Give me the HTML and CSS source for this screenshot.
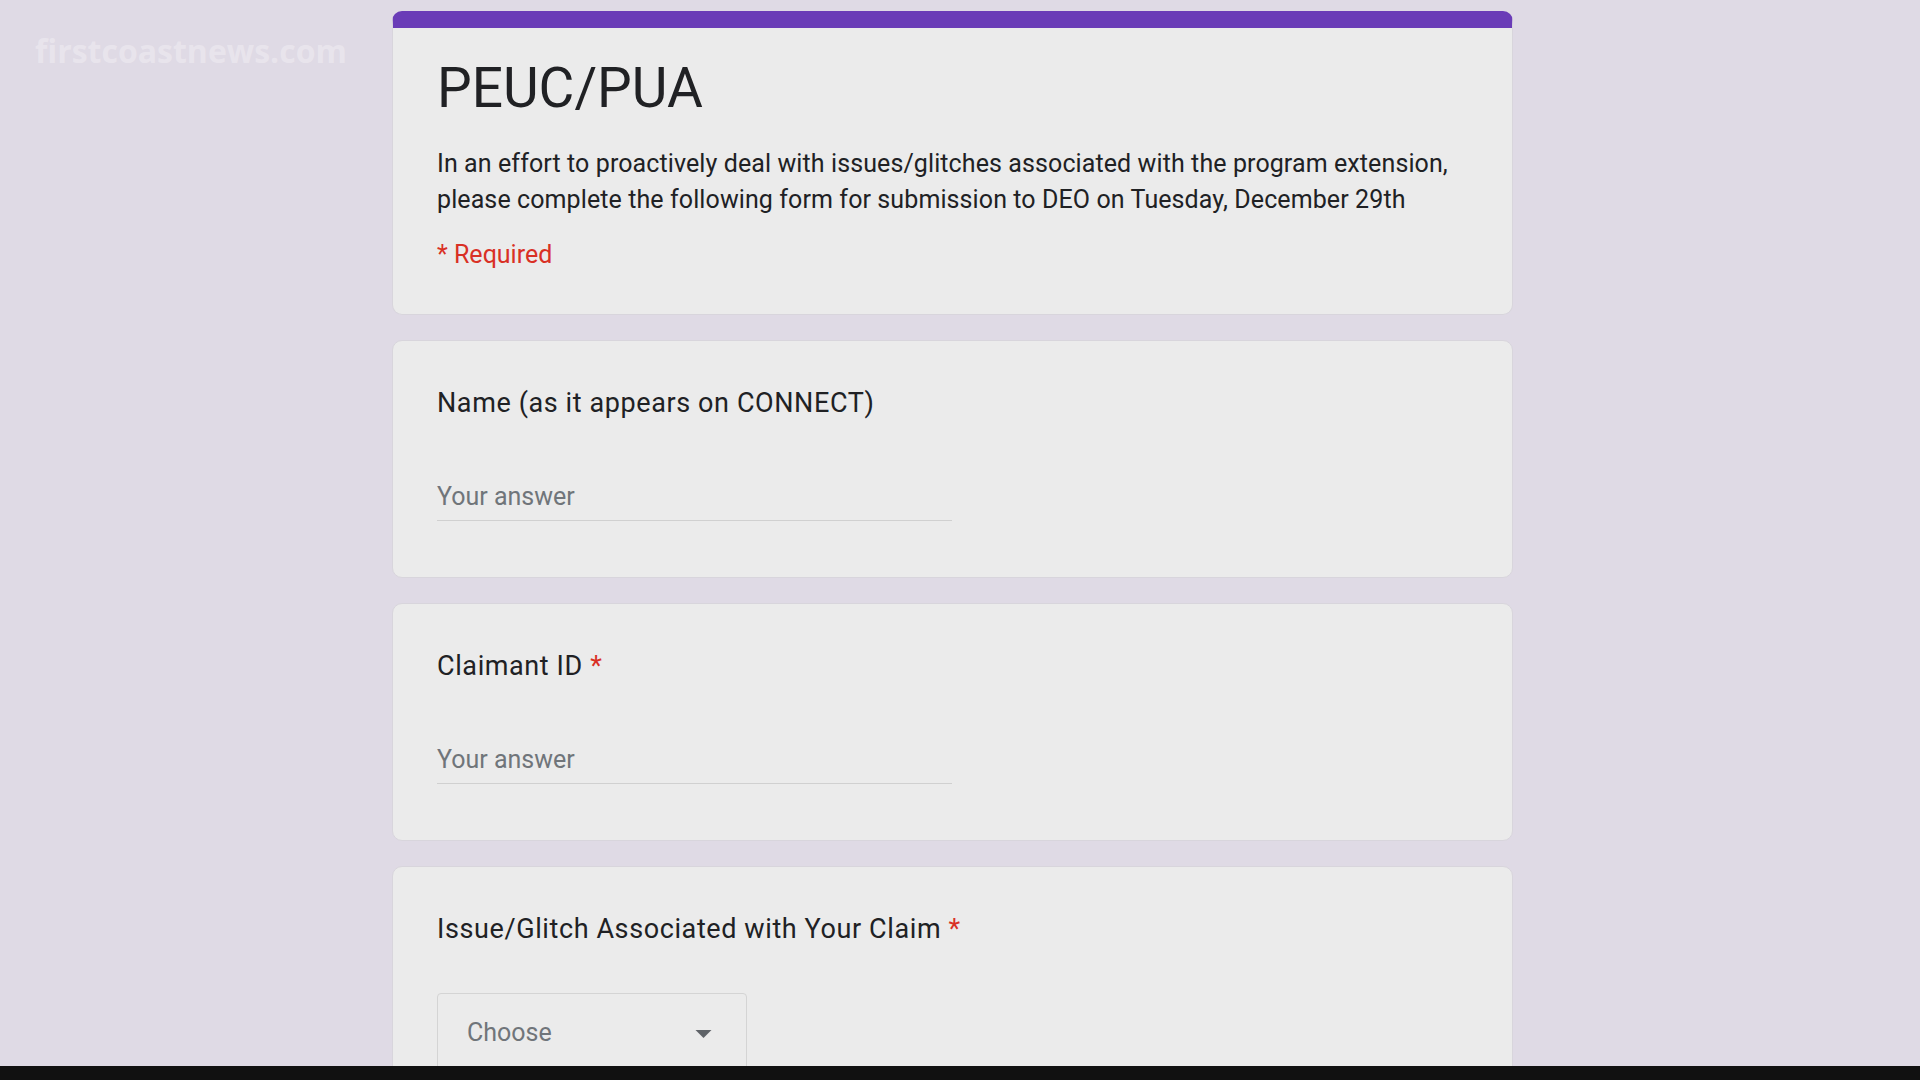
FILE: index.html
```html
<!DOCTYPE html>
<html>
<head>
	<title>PEUC/PUA</title>
	<link rel="stylesheet" href="styles.css">
</head>
<body>
	<div class="watermark">firstcoastnews.com</div>

	<div class="form">
		<!-- 表单头部 -->
		<div class="card card-head">
			<h1 class="title">PEUC/PUA</h1>
			<p class="desc">In an effort to proactively deal with issues/glitches associated with the program extension, please complete the following form for submission to DEO on Tuesday, December 29th</p>
			<p class="required">* Required</p>
		</div>

		<div class="card">
			<div class="label">Name (as it appears on CONNECT)</div>
			<div class="answer">Your answer</div>
		</div>

		<div class="card">
			<div class="label">Claimant ID <span class="star">*</span></div>
			<div class="answer">Your answer</div>
		</div>

		<div class="card">
			<div class="label">Issue/Glitch Associated with Your Claim <span class="star">*</span></div>
			<div class="select">
				<span>Choose</span>
				<svg class="arrow" width="17" height="8" viewBox="0 0 10 5"><path d="M0 0L5 5L10 0z" fill="#5f6368"/></svg>
			</div>
		</div>
	</div>

	<div class="letterbox"></div>
</body>
</html>
```

FILE: styles.css
```css
* {
	margin: 0;
	padding: 0;
	box-sizing: border-box;
}

body {
	background-color: #dfdae5;
	font-family: Roboto, "Liberation Sans", sans-serif;
	color: #202124;
	height: 1080px;
	overflow: hidden;
}

.watermark {
	position: absolute;
	left: 35px;
	top: 29px;
	font-family: "Open Sans", sans-serif;
	font-weight: 700;
	font-size: 32px;
	line-height: 44px;
	color: rgba(255, 255, 255, 0.3);
}

.form {
	width: 1121px;
	margin-left: 392px;
	padding-top: 11px;
	display: flex;
	flex-direction: column;
	gap: 25px;
}

.card {
	background-color: #ebebeb;
	border: 1px solid #d8d5dc;
	border-radius: 10px;
	padding: 46px 44px 55px;
	height: 238px;
}

.card-head {
	border-top: 17px solid #6a3cb7;
	padding: 28px 44px 47px;
	height: 304px;
}

.title {
	font-weight: 400;
	font-size: 55px;
	line-height: 64px;
	color: #202124;
}

.desc {
	margin-top: 26px;
	font-size: 25px;
	line-height: 36px;
	letter-spacing: 0.1px;
	width: 1060px;
}

.required {
	margin-top: 22px;
	font-size: 25px;
	line-height: 30px;
	color: #d93025;
}

.label {
	font-size: 27px;
	line-height: 32px;
	letter-spacing: 0.6px;
	color: #202124;
}

.star {
	color: #d93025;
}

.answer {
	margin-top: 63px;
	width: 515px;
	font-size: 25px;
	line-height: 30px;
	color: #70757a;
	padding-bottom: 8px;
	border-bottom: 1px solid #d0d0d0;
}

.select {
	margin-top: 48px;
	width: 310px;
	height: 90px;
	border: 1px solid #d4d4d4;
	border-radius: 4px;
	padding: 24px 34px 0 29px;
	display: flex;
	justify-content: space-between;
	font-size: 25px;
	line-height: 30px;
	color: #70757a;
}

.arrow {
	margin-top: 12px;
}

.letterbox {
	position: fixed;
	left: 0;
	right: 0;
	bottom: 0;
	height: 14px;
	background-color: #111;
}
```
